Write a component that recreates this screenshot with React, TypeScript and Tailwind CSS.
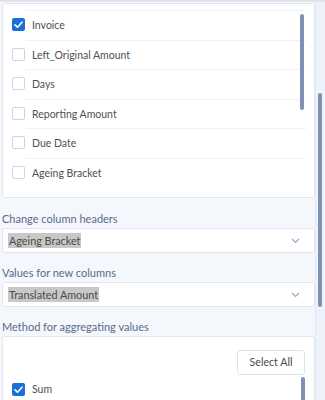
import React from "react";

const font = { fontFamily: 'Lato, "Noto Sans", Arial, sans-serif' };

function Check({ checked }: { checked: boolean }) {
  if (checked) {
    return (
      <svg width="13" height="13" viewBox="0 0 13 13" className="shrink-0">
        <rect x="0" y="0" width="13" height="13" rx="2" fill="#1a6fd9" />
        <polyline points="3,6.8 5.5,9.2 10,4.2" fill="none" stroke="#fff" strokeWidth="1.6" strokeLinecap="round" strokeLinejoin="round" />
      </svg>
    );
  }
  return <div className="w-[13px] h-[13px] shrink-0 rounded-[2px] border border-[#cdd5e2] bg-white" />;
}

function Row({ label, checked }: { label: string; checked?: boolean }) {
  return (
    <div className="flex items-center">
      <div className="ml-[9px] mr-[1px] flex items-center">
        <Check checked={!!checked} />
      </div>
      <div className="flex-1 h-[29.5px] border-t border-[#edf0f5] flex items-center pl-[6px] pt-[2px] mr-[8px] text-[10.5px] text-[#505050]">
        {label}
      </div>
    </div>
  );
}

function Chevron() {
  return (
    <svg width="9" height="6" viewBox="0 0 9 6" className="mr-[14px]">
      <polyline points="1,1 4.5,4.5 8,1" fill="none" stroke="#9aa7bb" strokeWidth="1.2" />
    </svg>
  );
}

function Select({ value }: { value: string }) {
  return (
    <div className="h-[25px] bg-white border border-[#e1e6ee] rounded-[3px] flex items-center justify-between">
      <span className="ml-[5px] bg-[#c8c8c8] text-[#4a4a4a] text-[10.8px] leading-[15px] px-[1px]">{value}</span>
      <Chevron />
    </div>
  );
}

function Label({ children }: { children: React.ReactNode }) {
  return <div className="h-[18px] mb-[2px] pt-[4px] text-[11px] leading-[14px] text-[#5a6a88]">{children}</div>;
}

export default function App() {
  return (
    <div className="w-[325px] h-[400px] overflow-hidden bg-[#f4f7fc] border-t-2 border-[#dfe3ea] flex" style={font}>
      <div className="w-[316px] pl-[2px] pt-[1px] shrink-0 border-r border-[#e6ebf3]">
        <div className="relative h-[195px] bg-white border border-[#e3e8f0] rounded-[3px] pt-[6px]">
          <Row label="Invoice" checked />
          <Row label="Left_Original Amount" />
          <Row label="Days" />
          <Row label="Reporting Amount" />
          <Row label="Due Date" />
          <Row label="Ageing Bracket" />
          <div className="absolute left-[297px] top-[10px] w-[4px] h-[96px] rounded-full bg-[#7f92b6]" />
        </div>
        <div className="mt-[10px]">
          <Label>Change column headers</Label>
        </div>
        <Select value="Ageing Bracket" />
        <div className="mt-[9px]">
          <Label>Values for new columns</Label>
        </div>
        <Select value="Translated Amount" />
        <div className="mt-[9px]">
          <Label>Method for aggregating values</Label>
        </div>
        <div className="relative h-[80px] bg-white border border-[#e3e8f0] rounded-[3px]">
          <div className="flex justify-end pt-[13px] pr-[9px]">
            <div className="w-[68px] h-[25px] border border-[#dde3ec] rounded-[3px] bg-white flex items-center justify-center text-[10.6px] text-[#4a4a4a]">
              Select All
            </div>
          </div>
          <div className="flex items-center mt-[8px]">
            <div className="ml-[9px] flex items-center">
              <Check checked />
            </div>
            <div className="pl-[7px] text-[10.5px] text-[#505050] leading-[13px]">Sum</div>
          </div>
          <div className="absolute left-[298px] top-[40px] w-[4px] h-[60px] rounded-full bg-[#7f92b6]" />
        </div>
      </div>
      <div className="flex-1 bg-[#eef3fb] pl-[2px]">
        <div className="mt-[91px] w-[4px] h-[214px] rounded-full bg-[#7f92b6]" />
      </div>
    </div>
  );
}
